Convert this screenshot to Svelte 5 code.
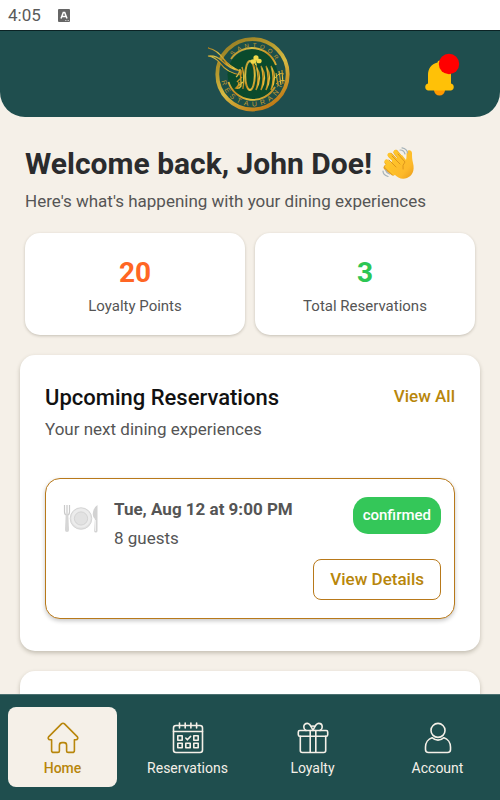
<script>
  const stats = [
    { value: 20, label: 'Loyalty Points', tone: 'orange' },
    { value: 3, label: 'Total Reservations', tone: 'green' }
  ];
  const tabs = ['Home', 'Reservations', 'Loyalty', 'Account'];
  let active = $state('Home');
  const strings = [257, 262, 267, 272];
</script>

<div class="screen">
  <div class="status">
    <span>4:05</span>
    <svg width="12" height="13" viewBox="0 0 12 13" aria-hidden="true">
      <rect width="12" height="13" rx="1" fill="#666" />
      <path d="M3 9.5 5.3 3.5h1.4L9 9.5M4 7.5h4" fill="none" stroke="#fff" stroke-width="1.5" />
      <path d="M7 11.5h4" stroke="#bbb" stroke-width="1" stroke-dasharray="1 .5" />
    </svg>
  </div>

  <header>
    <svg class="logo" width="86" height="78" viewBox="206 35 86 78" role="img" aria-label="Santoor Restaurant">
      <defs>
        <linearGradient id="gold" x1="0" y1="0" x2="1" y2="1">
          <stop offset="0" stop-color="#a87a1c" />
          <stop offset=".25" stop-color="#d9c247" />
          <stop offset=".5" stop-color="#c58b1c" />
          <stop offset=".75" stop-color="#e3c544" />
          <stop offset="1" stop-color="#a8650f" />
        </linearGradient>
        <linearGradient id="ring" gradientUnits="userSpaceOnUse" x1="220" y1="40" x2="260" y2="111">
          <stop offset="0" stop-color="#8f7a25" />
          <stop offset=".3" stop-color="#b2952b" />
          <stop offset=".6" stop-color="#d6ba43" />
          <stop offset="1" stop-color="#c07c17" />
        </linearGradient>
        <path id="arcTop" d="M224.500 74.300A27 27 0 0 1 278.500 74.300" />
        <path id="arcBottom" d="M219.500 74.300A32 32 0 0 0 283.500 74.300" />
      </defs>
      <circle cx="251.500" cy="74.300" r="34" fill="#1c4f49" />
      <circle cx="251.500" cy="74.300" r="25" fill="#0a4a2c" />
      <circle cx="251.500" cy="74.300" r="35.200" fill="none" stroke="url(#ring)" stroke-width="3.800" />
      <path d="M230 59A25.500 25.500 0 0 1 275 65M227.500 82A25.500 25.500 0 0 0 274 87" fill="none" stroke="url(#gold)" stroke-width="1.900" />
      <path d="M207 48Q217 50 223 60T241 71L240 75Q226 73 219 63Q214 57 207 56Q215 55 221 61Q229 69 239 71Q228 66 222 58Q216 50 207 48Z" fill="#1f4e4e" stroke="url(#gold)" stroke-width="1.200" />
      <g fill="none" stroke="url(#gold)">
        <ellipse cx="249" cy="75.500" rx="4.800" ry="14.500" stroke-width="2" />
        <path d="M235 77q3-2 4-8q1 11 1 17q-2 3-5 2q3-2 3-6M241 67q3 9 1 22M236 82l5-5M236 87l6-5" stroke-width="1.400" />
        {#each strings as x}
          <path d="M{x - 2} 66Q{x + 5} 77 {x - 2} 90Q{x + 2} 78 {x - 2} 66" stroke-width="1.300" />
        {/each}
        <path d="M275 73l2 12M278 71l2 14M281 70l1 14" stroke-width="1.200" />
        <path d="M274 78q4-6 9-4M275 84q5-5 9-3" stroke-width="1" />
      </g>
      <g fill="#efd94a">
        <ellipse cx="255" cy="58" rx="2.600" ry="2.800" />
        <ellipse cx="252.300" cy="61.500" rx="2.800" ry="2.300" />
        <ellipse cx="258" cy="61" rx="2.700" ry="2.300" />
        <path d="M254.500 60l1.500 6-2-1Z" />
      </g>
      <text class="logo-top"><textPath href="#arcTop" startOffset="53%" text-anchor="middle">S&nbsp;&nbsp;A&nbsp;&nbsp;N&nbsp;&nbsp;T&nbsp;&nbsp;O&nbsp;&nbsp;O&nbsp;&nbsp;R</textPath></text>
      <text class="logo-bottom"><textPath href="#arcBottom" startOffset="48%" text-anchor="middle">R&nbsp;&nbsp;E&nbsp;&nbsp;S&nbsp;&nbsp;T&nbsp;&nbsp;A&nbsp;&nbsp;U&nbsp;&nbsp;R&nbsp;&nbsp;A&nbsp;&nbsp;N&nbsp;&nbsp;T</textPath></text>
    </svg>

    <button class="bell" aria-label="Notifications">
      <svg width="36" height="44" viewBox="424 52 36 44" aria-hidden="true">
        <path d="M434 90h11a5.500 5.500 0 0 1-11 0Z" fill="#ff9800" />
        <path d="M437.500 62.500a2 2 0 0 1 4 0C448 64 451 69 451 75v8.500a3.600 3.600 0 0 1 0 7h-23a3.600 3.600 0 0 1 0-7V75c0-6 3-11 9.500-12.500Z" fill="#ffc107" />
        <circle cx="449" cy="64" r="10.200" fill="#f00" />
      </svg>
    </button>
  </header>

  <main>
    <section class="welcome">
      <h1>
        Welcome back, John Doe!
        <svg width="34" height="34" viewBox="0 0 34 34" role="img" aria-label="Waving hand">
          <defs>
            <linearGradient id="hand" x1="0" y1="0" x2="1" y2="1">
              <stop offset="0" stop-color="#ffca28" />
              <stop offset=".7" stop-color="#fdb92b" />
              <stop offset="1" stop-color="#e99a18" />
            </linearGradient>
          </defs>
          <path d="M5 15.500 12.500 23M4 20.500 11 26M8.500 8.500l10 10M14 5.500l9 11" stroke="#e59f22" stroke-width="5" stroke-linecap="round" />
          <path d="M4.500 14.500 13 23M5 19.500 12 26M7.500 8 18 18M13.500 5 22 15" stroke="#ffc52c" stroke-width="4.200" stroke-linecap="round" />
          <path d="M10 14 20 8l4 5c1-3 0-6 1-8 1-3 5-2 5 1 0 4 0 6 1 10 2 8-1 13-6 15-5 2-9 0-13-4l-6-6Z" fill="url(#hand)" />
          <path d="M7 13l7 7M10 9l8 8M16 7l7 8q-3 3-2 7" fill="none" stroke="#d9911b" stroke-width=".9" stroke-linecap="round" />
          <path d="M18 3q4 0 5 4M20 .8q5 1 5.500 5M1 24q0 4 5 5.500M3.500 23q1 3 4 4" fill="none" stroke="#a5b2b8" stroke-width="1.200" stroke-linecap="round" />
        </svg>
      </h1>
      <p>Here's what's happening with your dining experiences</p>
    </section>

    <section class="stats">
      {#each stats as stat}
        <article class="stat">
          <strong class={stat.tone}>{stat.value}</strong>
          <span>{stat.label}</span>
        </article>
      {/each}
    </section>

    <section class="panel">
      <div class="panel-head">
        <h2>Upcoming Reservations</h2>
        <a href="#all">View All</a>
      </div>
      <p class="sub">Your next dining experiences</p>

      <article class="booking">
        <div class="booking-top">
          <svg width="36" height="30" viewBox="0 0 36 30" aria-hidden="true">
            <circle cx="18" cy="14.500" r="10.800" fill="#e2e2e2" stroke="#cfcfcf" stroke-width=".8" />
            <circle cx="18" cy="14" r="9.600" fill="#ececec" />
            <circle cx="18" cy="14.500" r="6.600" fill="#e2e2e2" stroke="#cecece" stroke-width=".8" />
            <path d="M1.500 1v7q0 3 2.500 3t2.500-3V1M4 1v9" fill="none" stroke="#c9c9c9" stroke-width="1.200" />
            <path d="M2.700 10h2.600l.7 16q0 2-2 2t-2-2Z" fill="#d6d6d6" />
            <path d="M34.500 1v26q0 1.500-1.700 1.500T31.200 27l.7-12Q29 13 30 8q1-5 4.500-7Z" fill="#d2d2d2" />
            <path d="M32.500 16v11" stroke="#eee" />
          </svg>
          <div class="details">
            <h3>Tue, Aug 12 at 9:00 PM</h3>
            <p>8 guests</p>
          </div>
          <span class="badge">confirmed</span>
        </div>
        <button class="outline">View Details</button>
      </article>
    </section>

    <section class="panel"></section>
  </main>

  <nav>
    {#each tabs as tab}
      <button class="tab" class:active={active === tab} onclick={() => (active = tab)}>
        <svg width="32" height="32" viewBox="0 0 32 32" fill="none" stroke="currentColor" stroke-width="1.600" stroke-linejoin="round" stroke-linecap="round" aria-hidden="true">
          {#if tab === 'Home'}
            <path d="M14.500 1.900 1.800 14.600c-1.200 1.400-.4 3.100 1.200 3.100h1.600v10.700a2 2 0 0 0 2 2h4.300a1.500 1.500 0 0 0 1.500-1.500v-5.700a2.600 2.600 0 0 1 2.600-2.600h2a2.600 2.600 0 0 1 2.600 2.600v5.700a1.500 1.500 0 0 0 1.500 1.500h4.300a2 2 0 0 0 2-2V17.700H29c1.600 0 2.400-1.700 1.200-3.100L17.500 1.900a2.100 2.100 0 0 0-3 0Z" />
          {:else if tab === 'Reservations'}
            <rect x="1.500" y="3.500" width="29" height="27" rx="2.500" />
            <path d="M1.500 9.500h29M7.500 1v5M13.200 1v5M18.900 1v5M24.600 1v5" />
            <path d="M5.800 13.800h4.400v4.400H5.800ZM21.800 13.800h4.400v4.400h-4.400ZM5.800 21.300h4.400v4.400H5.800ZM13.800 21.300h4.400v4.400h-4.400ZM21.800 21.300h4.400v4.400h-4.400ZM13.800 16l1.600 1.800 3.200-3.400" />
          {:else if tab === 'Loyalty'}
            <rect x="1.300" y="8.500" width="29.400" height="5.800" rx="1.500" />
            <path d="M3.300 14.300v14.200a2 2 0 0 0 2 2h21.400a2 2 0 0 0 2-2V14.300M13.200 8.500v22M18.800 8.500v22M9 8.500C7 7.300 6.800 6 6.800 4.900c0-2 1.400-3.500 3.500-3.500 3 0 4.200 3.500 5.700 7.100 1.500-3.600 2.700-7.100 5.700-7.100 2.100 0 3.500 1.500 3.500 3.500 0 1.100-.2 2.400-2.200 3.600M13.800 4.500q2.200-1 4.400 0" />
          {:else}
            <circle cx="16" cy="8.400" r="7" />
            <path d="M10 15.700c-3.700 1.200-6.500 5-6.500 9.300v2.500a3 3 0 0 0 3 3h19a3 3 0 0 0 3-3V25c0-4.300-2.800-8.100-6.500-9.300Q16 20.700 10 15.700Z" />
          {/if}
        </svg>
        <span>{tab}</span>
      </button>
    {/each}
  </nav>
</div>

<style>
  :global(body) {
    margin: 0;
  }

  .screen {
    display: flex;
    flex-direction: column;
    height: 100vh;
    overflow: hidden;
    background: #f5f0e8;
    font-family: Roboto, sans-serif;
    color: #555;
  }

  h1, h2, h3, p {
    margin: 0;
  }

  button {
    font: inherit;
    cursor: pointer;
  }

  svg {
    flex: none;
  }

  .status {
    flex: none;
    display: flex;
    align-items: center;
    gap: 17px;
    height: 30px;
    padding: 0 8px;
    background: #fff;
    font-size: 17px;
    color: #5a5a5a;
  }

  header {
    flex: none;
    display: grid;
    grid-template-columns: 1fr auto 1fr;
    align-items: center;
    height: 87px;
    box-sizing: border-box;
    padding: 0 40px;
    border-top: 1px solid #0b2224;
    border-radius: 0 0 25px 25px;
    background: #1f4e4e;
  }

  .logo {
    grid-column: 2;
  }

  .logo text {
    font-family: "Liberation Sans", Arial, sans-serif;
    fill: #c39a30;
  }

  .logo-top {
    font-size: 6px;
  }

  .logo-bottom {
    font-size: 7px;
  }

  .bell {
    justify-self: end;
    display: flex;
    padding: 0;
    border: 0;
    background: none;
  }

  main {
    flex: 1;
    min-height: 0;
    overflow: hidden;
    display: flex;
    flex-direction: column;
    gap: 20px;
    padding: 28px 20px 0;
  }

  main > * {
    flex: none;
  }

  .welcome {
    padding: 0 5px;
  }

  h1 {
    display: flex;
    align-items: center;
    gap: 10px;
    font-size: 30px;
    line-height: 38px;
    font-weight: 700;
    color: #2a2b2d;
  }

  .welcome p {
    margin-top: 6px;
    font-size: 17px;
    line-height: 24px;
  }

  .stats {
    display: flex;
    gap: 10px;
    padding: 0 5px;
  }

  .stat {
    flex: 1;
    display: flex;
    flex-direction: column;
    align-items: center;
    gap: 6px;
    padding: 23px 10px 19px;
    border-radius: 15px;
    background: #fff;
    box-shadow: 0 1px 3px rgba(60, 50, 30, 0.25);
    font-size: 15px;
    line-height: 20px;
  }

  .stat strong {
    font-size: 28px;
    line-height: 34px;
  }

  .orange {
    color: #ff6624;
  }

  .green {
    color: #2dc653;
  }

  .panel {
    min-height: 100px;
    box-sizing: border-box;
    padding: 26px 25px 32px;
    border-radius: 15px;
    background: #fff;
    box-shadow: 0 2px 4px rgba(60, 50, 30, 0.27);
  }

  .panel-head {
    display: flex;
    justify-content: space-between;
    align-items: flex-start;
  }

  h2 {
    font-size: 22px;
    line-height: 34px;
    font-weight: 500;
    color: #111;
  }

  a {
    font-size: 17px;
    line-height: 30px;
    font-weight: 500;
    color: #b8860b;
    text-decoration: none;
  }

  .sub {
    margin-top: 2px;
    font-size: 17px;
    line-height: 24px;
  }

  .booking {
    display: flex;
    flex-direction: column;
    gap: 10px;
    margin-top: 37px;
    padding: 18px 13px;
    border: 1px solid #b8791a;
    border-radius: 15px;
    background: #fff;
    box-shadow: 0 2px 4px rgba(0, 0, 0, 0.22);
  }

  .booking-top {
    display: flex;
    align-items: flex-start;
    gap: 15px;
    padding-left: 4px;
  }

  .booking-top > svg {
    margin-top: 7px;
  }

  .details {
    flex: 1;
    display: flex;
    flex-direction: column;
    gap: 5px;
    font-size: 17px;
    line-height: 24px;
  }

  h3 {
    font-size: 17px;
    line-height: 24px;
    font-weight: 700;
  }

  .badge {
    padding: 0 10px;
    border-radius: 15px;
    background: #34c759;
    font-size: 15px;
    line-height: 37px;
    font-weight: 500;
    color: #fff;
  }

  .outline {
    align-self: flex-end;
    margin-top: -1px;
    padding: 0 16px;
    border: 1px solid #b8791a;
    border-radius: 8px;
    background: #fff;
    font-size: 17px;
    line-height: 39px;
    font-weight: 500;
    color: #b8860b;
  }

  nav {
    flex: none;
    display: flex;
    gap: 16px;
    padding: 12px 8px 13px;
    border-top: 1px solid #4a7070;
    background: #1f4e4e;
  }

  .tab {
    flex: 1 1 0;
    min-width: 0;
    height: 80px;
    display: flex;
    flex-direction: column;
    align-items: center;
    justify-content: center;
    gap: 4px;
    padding: 6px 0 0;
    border: 0;
    border-radius: 8px;
    background: none;
    font-size: 14px;
    line-height: 20px;
    color: #f5f0e8;
  }

  .tab.active {
    background: #f5f0e8;
    font-weight: 500;
    color: #b8860b;
  }
</style>
